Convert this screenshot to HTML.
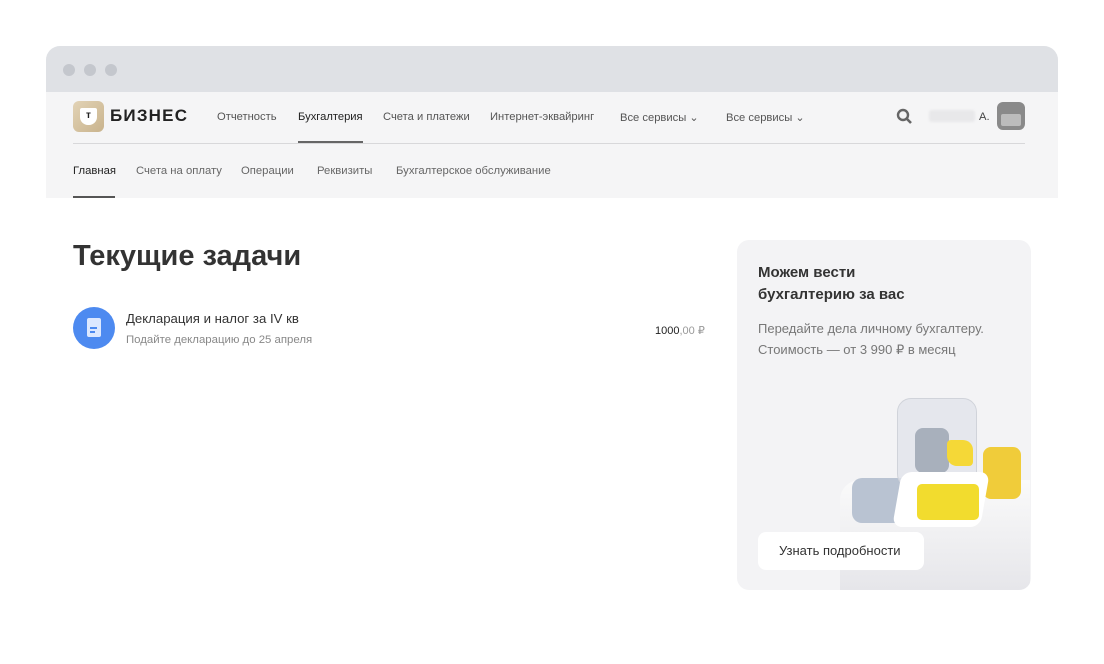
<!DOCTYPE html><html><head><meta charset="utf-8"><style>
*{margin:0;padding:0;box-sizing:border-box}
body{width:1104px;height:664px;background:#fff;font-family:"Liberation Sans",sans-serif;position:relative;overflow:hidden;color:#333}
.a{position:absolute}
.frame{left:46px;top:46px;width:1012px;height:152px;border-radius:14px 14px 0 0;background:#f5f5f6;overflow:hidden}
.bar{left:0;top:0;width:1012px;height:46px;background:#dfe1e5}
.dot{width:12px;height:12px;border-radius:50%;background:#c4c7cd;top:18px}
.nav{font-size:11.2px;color:#555;top:65px}
.sub{font-size:11.3px;color:#666;top:119px}
</style></head><body>
<div class="a frame">
<div class="a bar"></div>
<div class="a dot" style="left:17px"></div><div class="a dot" style="left:38px"></div><div class="a dot" style="left:59px"></div>
<div class="a" style="left:27px;top:55px;width:31px;height:31px;border-radius:6px;background:linear-gradient(135deg,#e2d3b6,#c9b38c)"></div>
<div class="a" style="left:34px;top:62px;width:17px;height:17px;border-radius:2px 2px 8px 8px;background:#fff;font-size:10px;font-weight:bold;text-align:center;line-height:16px;color:#222">т</div>
<div class="a" style="left:64px;top:60px;font-size:17px;font-weight:bold;color:#222;letter-spacing:1.2px">БИЗНЕС</div>
<div class="a nav" style="left:171px">Отчетность</div>
<div class="a nav" style="left:252px;color:#222">Бухгалтерия</div>
<div class="a" style="left:252px;top:95px;width:65px;height:2px;background:#666"></div>
<div class="a nav" style="left:337px">Счета и платежи</div>
<div class="a nav" style="left:444px">Интернет-эквайринг</div>
<div class="a nav" style="left:574px">Все сервисы &#8964;</div>
<div class="a nav" style="left:680px">Все сервисы &#8964;</div>
<svg class="a" style="left:850px;top:62px" width="16" height="16"><circle cx="7" cy="7" r="5" fill="none" stroke="#666" stroke-width="2.4"/><line x1="11" y1="11" x2="15" y2="15" stroke="#666" stroke-width="2.6"/></svg>
<div class="a" style="left:883px;top:64px;width:46px;height:12px;background:#e8e8ea;border-radius:3px;filter:blur(1px)"></div>
<div class="a nav" style="left:933px;color:#444">А.</div>
<div class="a" style="left:951px;top:56px;width:28px;height:28px;border-radius:6px;background:#8a8a8a"></div>
<div class="a" style="left:955px;top:68px;width:20px;height:12px;border-radius:2px;background:#bcbcbc"></div>
<div class="a" style="left:27px;top:97px;width:952px;height:1px;background:#d8d8da"></div>
<div class="a sub" style="left:27px;color:#222">Главная</div>
<div class="a" style="left:27px;top:150px;width:42px;height:2px;background:#555"></div>
<div class="a sub" style="left:90px">Счета на оплату</div>
<div class="a sub" style="left:195px">Операции</div>
<div class="a sub" style="left:271px">Реквизиты</div>
<div class="a sub" style="left:350px">Бухгалтерское обслуживание</div>
</div>
<div class="a" style="left:73px;top:240px;font-size:29px;font-weight:bold;color:#333">Текущие задачи</div>
<div class="a" style="left:73px;top:307px;width:42px;height:42px;border-radius:50%;background:#4d8af0"></div>
<div class="a" style="left:87px;top:318px;width:14px;height:19px;border-radius:2px;background:#dce8ff"></div>
<div class="a" style="left:90px;top:327px;width:7px;height:2px;background:#4d8af0"></div>
<div class="a" style="left:90px;top:331px;width:5px;height:2px;background:#4d8af0"></div>
<div class="a" style="left:126px;top:311px;font-size:13.2px;color:#333">Декларация и налог за IV кв</div>
<div class="a" style="left:126px;top:334px;font-size:11.4px;color:#888">Подайте декларацию до 25 апреля</div>
<div class="a" style="left:655px;top:324px;font-size:11px;color:#222">1000<span style="color:#999">,00 ₽</span></div>
<div class="a" style="left:737px;top:240px;width:294px;height:350px;border-radius:12px;background:#f3f3f5;overflow:hidden">
<div class="a" style="left:21px;top:22px;font-size:15px;font-weight:bold;color:#333;line-height:22px">Можем вести<br>бухгалтерию за вас</div>
<div class="a" style="left:21px;top:78px;font-size:13px;color:#777;line-height:21px">Передайте дела личному бухгалтеру.<br>Стоимость — от 3 990 ₽ в месяц</div>
<div class="a" style="left:103px;top:240px;width:190px;height:110px;background:linear-gradient(#fafafa,#e6e6ea);border-radius:20px 0 0 0"></div>
<div class="a" style="left:115px;top:238px;width:95px;height:45px;border-radius:10px;background:#b9c3d2"></div>
<div class="a" style="left:160px;top:158px;width:80px;height:90px;border-radius:14px;background:rgba(225,228,235,.8);border:1px solid #d0d3da"></div>
<div class="a" style="left:178px;top:188px;width:34px;height:45px;border-radius:8px;background:#a8b0bc"></div>
<div class="a" style="left:210px;top:200px;width:26px;height:26px;border-radius:4px 10px 4px 10px;background:#f5d837"></div>
<div class="a" style="left:246px;top:207px;width:38px;height:52px;border-radius:8px;background:#f0cc3a"></div>
<div class="a" style="left:160px;top:232px;width:88px;height:55px;border-radius:10px;background:#fff;transform:skewX(-10deg)"></div>
<div class="a" style="left:180px;top:244px;width:62px;height:36px;border-radius:5px;background:#f2dc2e"></div>
<div class="a" style="left:21px;top:292px;width:166px;height:38px;border-radius:8px;background:#fff;font-size:13px;color:#333;line-height:38px;padding-left:21px">Узнать подробности</div>
</div>
</body></html>
